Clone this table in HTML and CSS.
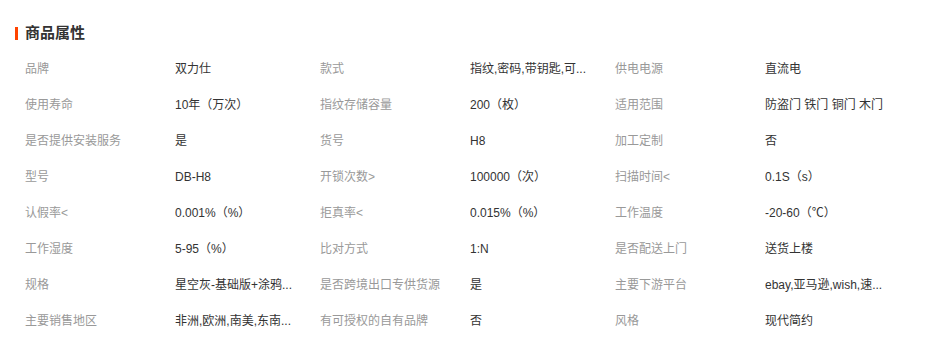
FILE: index.html
```html
<!DOCTYPE html>
<html lang="zh-CN">
<head>
<meta charset="utf-8">
<title>商品属性</title>
<link rel="stylesheet" href="styles.css">
</head>
<body>
<section class="attrs">
  <h2 class="attrs-title"><span class="attrs-bar"></span>商品属性</h2>
  <ul class="attrs-grid">
    <li class="attr"><span class="attr-name">品牌</span><span class="attr-value">双力仕</span></li>
    <li class="attr"><span class="attr-name">款式</span><span class="attr-value">指纹,密码,带钥匙,可...</span></li>
    <li class="attr"><span class="attr-name">供电电源</span><span class="attr-value">直流电</span></li>
    <li class="attr"><span class="attr-name">使用寿命</span><span class="attr-value">10年（万次）</span></li>
    <li class="attr"><span class="attr-name">指纹存储容量</span><span class="attr-value">200（枚）</span></li>
    <li class="attr"><span class="attr-name">适用范围</span><span class="attr-value">防盗门 铁门 铜门 木门</span></li>
    <li class="attr"><span class="attr-name">是否提供安装服务</span><span class="attr-value">是</span></li>
    <li class="attr"><span class="attr-name">货号</span><span class="attr-value">H8</span></li>
    <li class="attr"><span class="attr-name">加工定制</span><span class="attr-value">否</span></li>
    <li class="attr"><span class="attr-name">型号</span><span class="attr-value">DB-H8</span></li>
    <li class="attr"><span class="attr-name">开锁次数&gt;</span><span class="attr-value">100000（次）</span></li>
    <li class="attr"><span class="attr-name">扫描时间&lt;</span><span class="attr-value">0.1S（s）</span></li>
    <li class="attr"><span class="attr-name">认假率&lt;</span><span class="attr-value">0.001%（%）</span></li>
    <li class="attr"><span class="attr-name">拒真率&lt;</span><span class="attr-value">0.015%（%）</span></li>
    <li class="attr"><span class="attr-name">工作温度</span><span class="attr-value">-20-60（℃）</span></li>
    <li class="attr"><span class="attr-name">工作湿度</span><span class="attr-value">5-95（%）</span></li>
    <li class="attr"><span class="attr-name">比对方式</span><span class="attr-value">1:N</span></li>
    <li class="attr"><span class="attr-name">是否配送上门</span><span class="attr-value">送货上楼</span></li>
    <li class="attr"><span class="attr-name">规格</span><span class="attr-value">星空灰-基础版+涂鸦...</span></li>
    <li class="attr"><span class="attr-name">是否跨境出口专供货源</span><span class="attr-value">是</span></li>
    <li class="attr"><span class="attr-name">主要下游平台</span><span class="attr-value">ebay,亚马逊,wish,速...</span></li>
    <li class="attr"><span class="attr-name">主要销售地区</span><span class="attr-value">非洲,欧洲,南美,东南...</span></li>
    <li class="attr"><span class="attr-name">有可授权的自有品牌</span><span class="attr-value">否</span></li>
    <li class="attr"><span class="attr-name">风格</span><span class="attr-value">现代简约</span></li>
  </ul>
</section>
</body>
</html>
```
FILE: styles.css
```css
html, body {
  margin: 0;
  padding: 0;
  background: #fff;
}
body {
  font-family: "Liberation Sans", "Noto Sans CJK SC", sans-serif;
  font-size: 12px;
  color: #333;
}
.attrs {
  padding: 24px 15px 0 15px;
}
.attrs-title {
  display: flex;
  align-items: center;
  gap: 7px;
  margin: 0;
  height: 18px;
  font-size: 15px;
  font-weight: bold;
  color: #333;
  line-height: 18px;
}
.attrs-bar {
  display: block;
  width: 3px;
  height: 13px;
  background: #ff4400;
}
.attrs-grid {
  list-style: none;
  margin: 9px 0 0 0;
  padding: 0 0 0 10px;
  display: grid;
  grid-template-columns: repeat(3, 295px);
}
.attr {
  display: flex;
  height: 36px;
  line-height: 36px;
  white-space: nowrap;
}
.attr-name {
  width: 150px;
  flex: none;
  color: #999;
}
.attr-value {
  width: 130px;
  overflow: hidden;
  text-overflow: ellipsis;
  color: #333;
}
```
